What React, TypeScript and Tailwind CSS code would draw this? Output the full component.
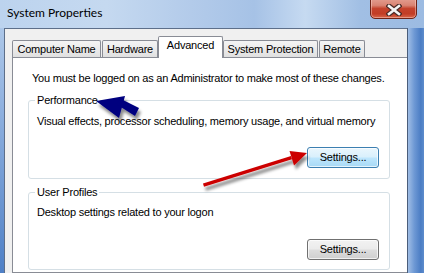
import React from "react";

const font = { fontFamily: '"Liberation Sans", Arial, sans-serif' };

function Tab({ label, w, selected }: { label: string; w: string; selected?: boolean }) {
  if (selected) {
    return (
      <div
        className={`${w} shrink-0 h-[22px] -mb-[1px] relative z-10 bg-white border border-b-0 border-[#898c95] rounded-t-[2px] flex justify-center pt-[2px] text-[11px] leading-[13px] tracking-[-0.2px] text-black`}
      >
        {label}
      </div>
    );
  }
  return (
    <div
      className={`${w} shrink-0 h-[17px] bg-[linear-gradient(180deg,#f4f4f4_0%,#ececec_45%,#e0e0e0_100%)] border border-b-0 border-[#898c95] rounded-t-[2px] flex justify-center pt-[2px] text-[11px] leading-[13px] tracking-[-0.2px] text-black`}
    >
      {label}
    </div>
  );
}

function Group({
  legend,
  desc,
  button,
  className,
  pt,
  btnMt,
  pb,
}: {
  legend: string;
  desc: string;
  button: React.ReactNode;
  className: string;
  pt: string;
  btnMt: string;
  pb: string;
}) {
  return (
    <fieldset className={`${className} w-[362px] min-w-0 border border-[#d5dfe5] rounded-[3px] pl-[8px] pr-[10px] ${pt} ${pb}`}>
      <legend className="px-[2px] -ml-[2px] text-[11px] leading-[13px] tracking-[-0.2px] text-black">{legend}</legend>
      <div className="text-[11px] leading-[13px] tracking-[-0.22px] text-black whitespace-nowrap">{desc}</div>
      <div className={`flex justify-end ${btnMt}`}>{button}</div>
    </fieldset>
  );
}

function Arrows() {
  return (
    <svg className="absolute left-0 top-0 pointer-events-none" width="424" height="273" viewBox="0 0 424 273">
      <defs>
        <filter id="sh" x="-20%" y="-50%" width="140%" height="200%">
          <feDropShadow dx="2" dy="4" stdDeviation="1.8" floodColor="#000" floodOpacity="0.45" />
        </filter>
      </defs>
      <g filter="url(#sh)">
        <polygon points="96,101 125,96 119,118" fill="#05057f" />
        <polygon points="116,104 121,99 139,108 135,116" fill="#05057f" />
      </g>
      <g filter="url(#sh)">
        <polygon points="203,183.5 291,156 292,159.2 204,186.7" fill="#cc0000" />
        <polygon points="307,153 289.5,151 294,165.5" fill="#cc0000" />
      </g>
    </svg>
  );
}

export default function App() {
  const blueBtn = (
    <div className="w-[72px] h-[21px] rounded-[3px] border border-[#3c7fb1] bg-[linear-gradient(180deg,#eaf6fd_0%,#d9f0fc_48%,#bee6fd_52%,#a7d9f5_100%)] shadow-[inset_0_0_0_1px_rgba(255,255,255,0.7)] flex items-center justify-center text-[11px] leading-[13px] tracking-[-0.2px] text-black">
      Settings...
    </div>
  );
  const grayBtn = (
    <div className="w-[72px] h-[21px] rounded-[3px] border border-[#707070] bg-[linear-gradient(180deg,#f2f2f2_0%,#ebebeb_48%,#dddddd_52%,#cfcfcf_100%)] shadow-[inset_0_0_0_1px_rgba(255,255,255,0.7)] flex items-center justify-center text-[11px] leading-[13px] tracking-[-0.2px] text-black">
      Settings...
    </div>
  );

  return (
    <div className="relative w-[424px] h-[273px] overflow-hidden flex flex-col bg-[linear-gradient(180deg,#b7cfec_0%,#8fb1df_40%,#4f80c6_100%)]" style={font}>
      <div className="h-[28px] shrink-0 flex items-start pl-[7px] pt-[5px] bg-[linear-gradient(90deg,#bcd3ee_0%,#c5d9f0_25%,#b3cbea_45%,#a6c2e6_60%,#c6daf1_72%,#a1bfe4_85%,#9cbbe2_100%)]">
        <span className="text-[12px] leading-[16px] text-black" style={{ fontFamily: 'Lato, "Open Sans", sans-serif' }}>
          System Properties
        </span>
      </div>
      <div className="absolute top-[-4px] right-[7px] w-[47px] h-[23px] rounded-b-[5px] border border-[#6e2418] bg-[linear-gradient(180deg,#e6a598_0%,#d98372_40%,#c4422c_55%,#c23d25_80%,#d9664a_100%)] shadow-[inset_0_0_0_1px_rgba(255,220,210,0.45)] flex items-center justify-center pt-[4px]">
        <svg width="16" height="12" viewBox="0 0 16 12">
          <path d="M3 2 L13 10 M13 2 L3 10" stroke="#4a2a26" strokeWidth="5" strokeLinecap="square" />
          <path d="M3 2 L13 10 M13 2 L3 10" stroke="#f4f4f4" strokeWidth="2.6" strokeLinecap="square" />
        </svg>
      </div>
      <div className="flex flex-1 min-h-0">
        <div className="w-[4px] shrink-0" />
        <div className="w-[403px] shrink-0 overflow-hidden flex flex-col bg-[#f0f0f0] border-l border-t border-[#5d6f8a] pl-[7px] pt-[7px]">
          <div className="flex items-end h-[21px] shrink-0">
            <Tab label="Computer Name" w="w-[89px]" />
            <div className="w-[1px] shrink-0" />
            <Tab label="Hardware" w="w-[56px]" />
            <Tab label="Advanced" w="w-[65px]" selected />
            <Tab label="System Protection" w="w-[95px]" />
            <div className="w-[1px] shrink-0" />
            <Tab label="Remote" w="w-[46px]" />
          </div>
          <div className="w-[396px] flex-1 bg-white border border-[#898c95] pl-[15px] pt-[14px]">
            <div className="ml-[4px] text-[11px] leading-[13px] tracking-[-0.22px] text-black whitespace-nowrap">
              You must be logged on as an Administrator to make most of these changes.
            </div>
            <Group
              className="mt-[9px]"
              legend="Performance"
              desc="Visual effects, processor scheduling, memory usage, and virtual memory"
              button={blueBtn}
              pt="pt-[8px]"
              btnMt="mt-[19px]"
              pb="pb-[10px]"
            />
            <Group
              className="mt-[7px]"
              legend="User Profiles"
              desc="Desktop settings related to your logon"
              button={grayBtn}
              pt="pt-[7px]"
              btnMt="mt-[20px]"
              pb="pb-[9px]"
            />
          </div>
        </div>
        <div className="w-[17px] shrink-0 border-l border-[#4a5d7a] bg-[linear-gradient(90deg,#9fbde5_0%,#6d98d4_40%,#4b7dc4_80%,#5d8ccc_100%)]" />
      </div>
      <Arrows />
    </div>
  );
}
